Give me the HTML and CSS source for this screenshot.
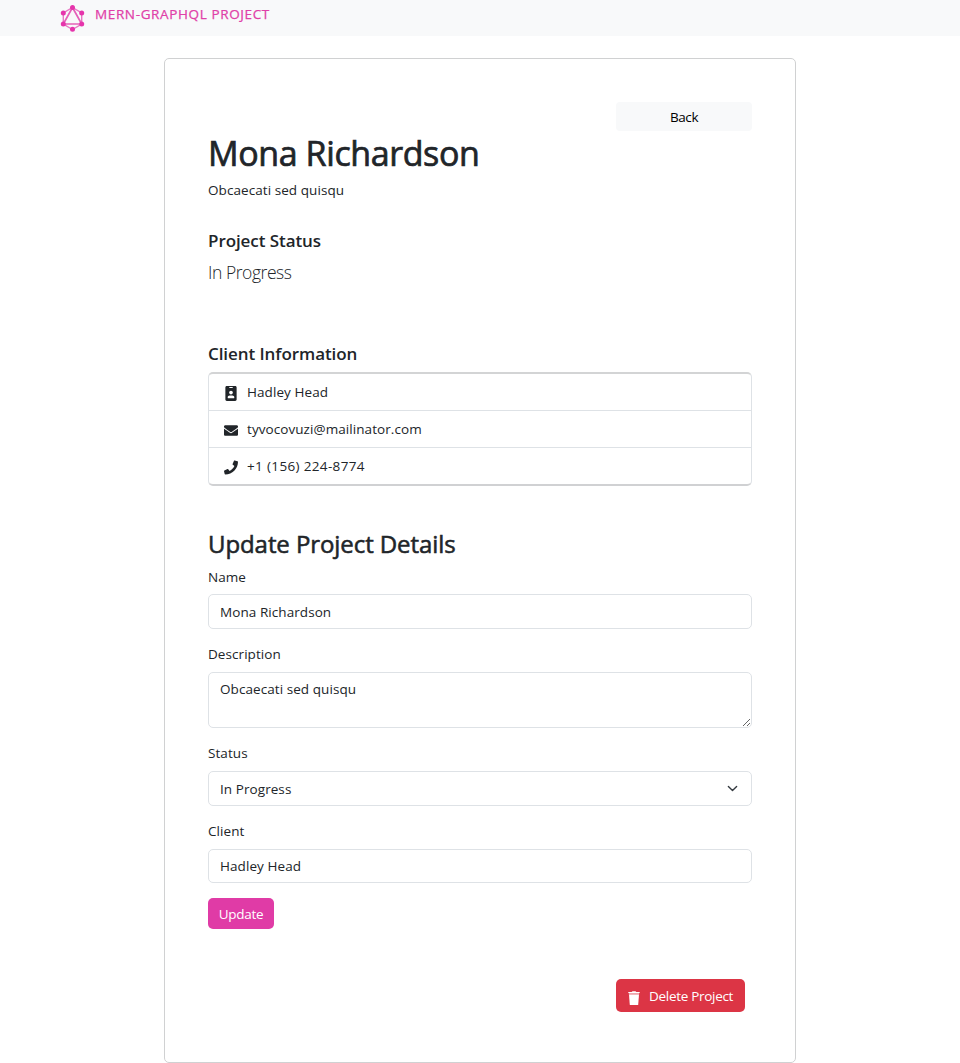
FILE: index.html
```html
<!DOCTYPE html>
<html lang="en">
<head>
<meta charset="utf-8">
<title>MERN-GraphQL Project</title>
<link rel="stylesheet" href="styles.css">
</head>
<body>
<nav class="navbar">
  <a class="brand">
    <svg class="logo" viewBox="0 0 26 28">
      <g fill="none" stroke="#e878c3" stroke-width="1.4"><path d="M13.500 3.500L22.700 9V20L13.500 25.500L4.300 20V9Z"/><path stroke="#e560b8" stroke-width="1.7" d="M13.500 3.500L22.700 20H4.300Z"/></g>
      <g fill="#e535ab"><circle cx="13.500" cy="3.500" r="2.500"/><circle cx="22.700" cy="9" r="2.500"/><circle cx="22.700" cy="20" r="2.500"/><circle cx="13.500" cy="25.300" r="2.500"/><circle cx="4.300" cy="20" r="2.500"/><circle cx="4.300" cy="9" r="2.500"/></g>
    </svg>
    <span class="brand-name">MERN-GRAPHQL PROJECT</span>
  </a>
</nav>
<main class="card">
  <a class="btn-back">Back</a>
  <h1 class="title">Mona Richardson</h1>
  <p class="desc">Obcaecati sed quisqu</p>
  <h5 class="subtitle status-title">Project Status</h5>
  <p class="lead">In Progress</p>
  <h5 class="subtitle client-title">Client Information</h5>
  <ul class="list">
    <li class="item"><svg class="icon" viewBox="0 0 384 512"><path d="M336 0H48C21.500 0 0 21.500 0 48v416c0 26.500 21.500 48 48 48h288c26.500 0 48-21.500 48-48V48c0-26.500-21.500-48-48-48zM144 32h96c8.800 0 16 7.200 16 16s-7.200 16-16 16h-96c-8.800 0-16-7.200-16-16s7.200-16 16-16zm48 128c35.300 0 64 28.700 64 64s-28.700 64-64 64-64-28.700-64-64 28.700-64 64-64zm112 236.800c0 10.600-10 19.200-22.400 19.200H102.400C90 416 80 407.400 80 396.800v-19.200c0-31.800 30.100-57.600 67.200-57.600h5c12.300 5.100 25.700 8 39.800 8s27.600-2.900 39.800-8h5c37.100 0 67.200 25.800 67.200 57.600v19.200z"/></svg><span>Hadley Head</span></li>
    <li class="item"><svg class="icon" viewBox="0 0 512 512"><path d="M502.300 190.800c3.900-3.100 9.700-.2 9.700 4.700V400c0 26.500-21.500 48-48 48H48c-26.500 0-48-21.500-48-48V195.600c0-5 5.700-7.800 9.700-4.700 22.400 17.400 52.100 39.500 154.100 113.600 21.100 15.400 56.700 47.800 92.200 47.600 35.700.3 72-32.800 92.300-47.600 102-74.100 131.600-96.300 154-113.700zM256 320c23.200.4 56.600-29.200 73.400-41.400 132.700-96.300 142.800-104.700 173.400-128.700 5.800-4.500 9.200-11.500 9.200-18.900v-19c0-26.500-21.500-48-48-48H48c-26.500 0-48 21.500-48 48v19c0 7.400 3.400 14.300 9.200 18.900 30.600 23.900 40.700 32.400 173.400 128.700 16.800 12.200 50.200 41.800 73.400 41.400z"/></svg><span class="email">tyvocovuzi@mailinator.com</span></li>
    <li class="item"><svg class="icon" viewBox="0 0 512 512"><path d="M493.400 24.600l-104-24c-11.300-2.600-22.900 3.300-27.500 13.900l-48 112c-4.200 9.800-1.400 21.300 6.900 28l60.600 49.600c-36 76.700-98.900 140.500-177.200 177.200l-49.600-60.600c-6.800-8.300-18.200-11.100-28-6.900l-112 48C3.900 366.500-2 378.100.6 389.400l24 104C27.100 504.200 36.700 512 48 512c256.100 0 464-207.500 464-464 0-11.200-7.700-20.900-18.600-23.400z"/></svg><span class="phone">+1 (156) 224-8774</span></li>
  </ul>
  <h3 class="form-title">Update Project Details</h3>
  <form class="form">
    <label class="label name-label">Name</label>
    <input class="control" value="Mona Richardson">
    <label class="label">Description</label>
    <textarea class="control area">Obcaecati sed quisqu</textarea>
    <label class="label">Status</label>
    <div class="control select"><span>In Progress</span><svg class="chevron" viewBox="0 0 16 16"><path d="M2 5l6 6 6-6"/></svg></div>
    <label class="label">Client</label>
    <input class="control client" value="Hadley Head">
    <button class="btn-update" type="button">Update</button>
  </form>
  <button class="btn-delete" type="button"><svg class="trash" viewBox="0 0 12 14"><path d="M.3 1H3.700L4.500.2h3L8.300 1h3.400v1H.3z"/><path opacity=".55" d="M.8 2h10.400v1.500H.8z"/><path d="M1 3.500h10L10.200 14H1.800z"/></svg><span>Delete Project</span></button>
</main>
</body>
</html>
```
FILE: styles.css
```css
* { box-sizing: border-box; }
html, body { margin: 0; }
body {
  height: 1063px;
  overflow: hidden;
  background: #fff;
  color: #212529;
  font: 400 13.5px/21px "Open Sans", "Noto Sans", sans-serif;
  letter-spacing: .07px;
}
h1, h3, h5, p, ul { margin: 0; padding: 0; }
.navbar { height: 36px; padding-left: 59px; background: #f8f9fa; }
.brand { display: flex; gap: 10px; color: #e040a8; }
.logo { width: 26px; height: 28px; margin-top: 4px; }
.brand-name { margin-top: 4px; letter-spacing: .63px; -webkit-text-stroke: .25px; }
.card {
  display: flex;
  flex-direction: column;
  width: 632px;
  height: 1005px;
  margin: 22px auto 0;
  padding: 43px;
  border: 1px solid #d0d1d2;
  border-radius: 5px;
}
.btn-back {
  align-self: flex-end;
  width: 136px;
  height: 29px;
  border-radius: 4px;
  background: #f8f9fa;
  color: #000;
  line-height: 30px;
  text-align: center;
  letter-spacing: -.4px;
}
.title { height: 42px; margin-top: 1px; font-size: 34px; font-weight: 400; line-height: 42px; letter-spacing: -.4px; -webkit-text-stroke: .7px; }
.desc { margin-top: 6px; }
.subtitle { height: 21px; font-size: 17px; font-weight: 600; line-height: 21px; letter-spacing: -.07px; }
.status-title { margin-top: 29px; }
.lead { height: 26px; margin-top: 8px; font-size: 17.5px; font-weight: 300; line-height: 27px; letter-spacing: -.45px; }
.client-title { margin-top: 58px; }
.list {
  height: 114px;
  margin-top: 8px;
  border: 1px solid #dee2e6;
  border-top: 2px solid #d3d4d5;
  border-bottom: 2px solid #d0d1d3;
  border-radius: 5px;
  list-style: none;
}
.item { display: flex; align-items: center; gap: 9px; height: 37px; padding-left: 15px; }
.item:first-child { height: 36px; }
.item + .item { border-top: 1px solid #dee2e6; }
.icon { width: 14px; height: 15px; margin-top: 3px; fill: #212529; }
.phone { letter-spacing: .35px; }
.form-title { height: 29px; margin-top: 43px; font-size: 24px; font-weight: 400; line-height: 29px; letter-spacing: -.08px; -webkit-text-stroke: .55px; }
.form { display: flex; flex-direction: column; margin-top: 8px; }
.label { height: 21px; margin-bottom: 7px; }
.name-label { line-height: 22px; }
.control {
  height: 35px;
  margin: 0 0 15px;
  padding: 5px 11px;
  border: 1px solid #dee2e6;
  border-radius: 5px;
  outline: 0;
  background: #fff;
  color: #212529;
  font: inherit;
  letter-spacing: inherit;
}
.area { height: 56px; padding-top: 6px; resize: vertical; }
.select { display: flex; align-items: center; justify-content: space-between; padding-top: 6px; }
.chevron { width: 11px; height: 11px; margin: -2px 2px 0 0; fill: none; stroke: #343a40; stroke-width: 2; stroke-linecap: round; stroke-linejoin: round; }
.client { height: 34px; }
.btn-update, .btn-delete { border: 0; border-radius: 5px; color: #fff; font: inherit; letter-spacing: -.3px; }
.btn-update { width: 66px; height: 31px; padding: 2px 0 0; background: #e03ba6; }
.btn-delete {
  display: flex;
  align-items: center;
  gap: 9px;
  width: 129px;
  height: 33px;
  margin: 50px 0 0 408px;
  padding: 2px 0 0 12px;
  background: #dc3545;
}
.btn-delete span { white-space: nowrap; }
.trash { width: 12px; height: 14px; margin-top: 2px; fill: #fff; }
```
